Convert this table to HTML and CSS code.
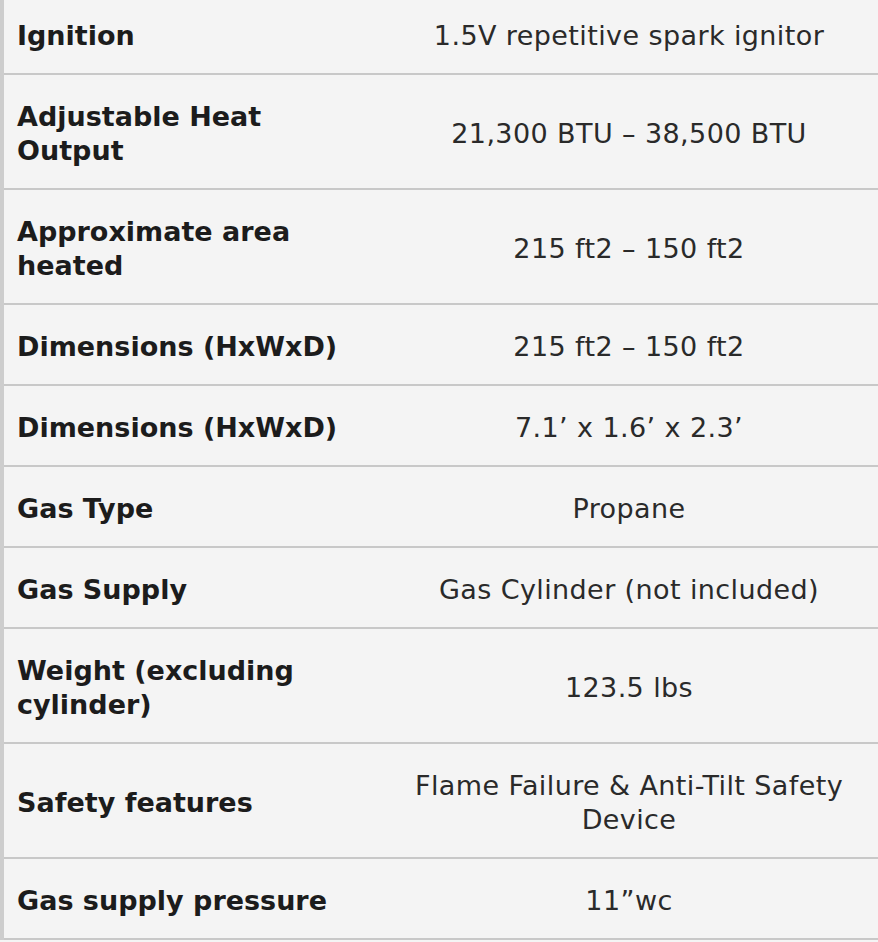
FILE: index.html
```html
<!DOCTYPE html>
<html>
<head>
<meta charset="utf-8">
<link rel="stylesheet" href="styles.css">
</head>
<body>
<table class="specs">
  <tbody>
    <tr class="first"><th>Ignition</th><td>1.5V repetitive spark ignitor</td></tr>
    <tr><th>Adjustable Heat Output</th><td>21,300 BTU – 38,500 BTU</td></tr>
    <tr><th>Approximate area heated</th><td>215 ft2 – 150 ft2</td></tr>
    <tr><th>Dimensions (HxWxD)</th><td>215 ft2 – 150 ft2</td></tr>
    <tr><th>Dimensions (HxWxD)</th><td>7.1’ x 1.6’ x 2.3’</td></tr>
    <tr><th>Gas Type</th><td>Propane</td></tr>
    <tr><th>Gas Supply</th><td>Gas Cylinder (not included)</td></tr>
    <tr><th>Weight (excluding cylinder)</th><td>123.5 lbs</td></tr>
    <tr><th>Safety features</th><td>Flame Failure &amp; Anti-Tilt Safety Device</td></tr>
    <tr><th>Gas supply pressure</th><td>11”wc</td></tr>
  </tbody>
</table>
</body>
</html>
```
FILE: styles.css
```css
html, body {
  margin: 0;
  padding: 0;
  background: #f4f4f4;
}
.specs {
  width: 100%;
  border-collapse: collapse;
  border-left: 4px solid #cdcdcd;
  font-family: "DejaVu Sans", sans-serif;
  font-size: 27px;
  line-height: 34px;
}
.specs th,
.specs td {
  padding: 25px 20px 20px 13px;
  border-bottom: 2px solid #c8c8c8;
  vertical-align: middle;
}
.specs th {
  width: 343px;
  text-align: left;
  font-weight: 700;
  color: #1c1c1c;
}
.specs td {
  text-align: center;
  color: #2a2a2a;
  padding-left: 20px;
  letter-spacing: 0.4px;
}
.specs .first th,
.specs .first td {
  padding-top: 19px;
}
```
